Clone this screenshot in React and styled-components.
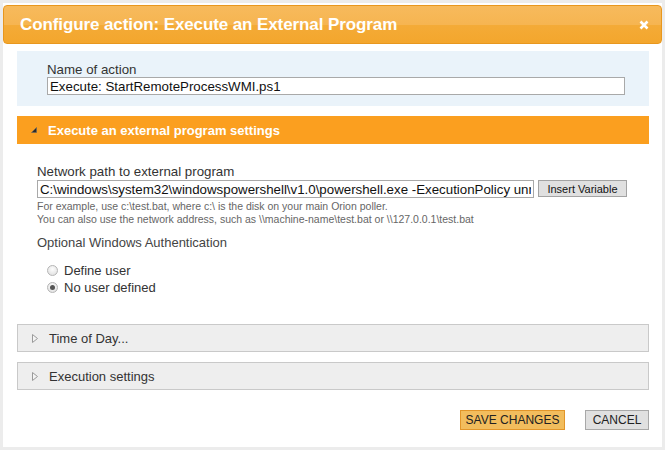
import styled, { createGlobalStyle } from "styled-components"

const Global = createGlobalStyle`
  html, body {
    margin: 0;
    padding: 0;
    background: #ececec;
    font-family: "Liberation Sans", Arial, sans-serif;
    color: #333;
  }
`

const Page = styled.div`
  padding: 3px;
`

const Dialog = styled.div`
  background: #fff;
  height: 444px;
  padding-top: 2px;
  box-sizing: border-box;
`

const Header = styled.div`
  height: 39px;
  box-sizing: border-box;
  display: flex;
  align-items: center;
  justify-content: space-between;
  padding: 0 12px 0 16px;
  border: 1px solid #e8971e;
  border-radius: 4px;
  background: linear-gradient(#f7ba5c 0%, #f6b551 50%, #f4ab37 52%, #f3a62d 100%);
`

const Title = styled.h1`
  margin: 0;
  font-size: 17px;
  font-weight: bold;
  color: #fff;
  letter-spacing: -0.1px;
`

const Close = styled.span`
  display: flex;
  width: 10px;
  height: 10px;
`

const Content = styled.div`
  padding: 7px 13px 0 14px;
`

const NameBox = styled.div`
  height: 55px;
  box-sizing: border-box;
  background: #eaf3fa;
  padding: 11px 0 0 30px;
`

const Label = styled.div`
  font-size: 13.3px;
  line-height: 15px;
  color: #333;
`

const TextInput = styled.input`
  display: block;
  box-sizing: border-box;
  width: ${p => p.$w}px;
  height: 18px;
  margin: 0;
  padding: 0 2px;
  border: 1px solid #a9a9a9;
  font-family: "Liberation Sans", Arial, sans-serif;
  font-size: 13.3px;
  color: #111;
  background: #fff;
  outline: none;
`

const Bar = styled.div`
  height: 28px;
  box-sizing: border-box;
  display: flex;
  align-items: center;
  gap: 11px;
  padding-left: 14px;
  font-size: 13px;
  background: ${p => (p.$open ? "#fb9f1f" : "#eeeeee")};
  border: ${p => (p.$open ? "none" : "1px solid #c9c9c9")};
  color: ${p => (p.$open ? "#fff" : "#333")};
  font-weight: ${p => (p.$open ? "bold" : "normal")};
  margin-top: ${p => p.$mt}px;
`

const Section = styled.div`
  padding: 20px 0 0 20px;
`

const Row = styled.div`
  display: flex;
  align-items: center;
  gap: 4px;
  margin-top: 1px;
`

const SmallButton = styled.button`
  height: 17px;
  width: 89px;
  padding: 0;
  font-family: "Liberation Sans", Arial, sans-serif;
  font-size: 11px;
  color: #111;
  background: #e0e0e0;
  border: 1px solid #a3a3a3;
  align-self: flex-start;
`

const Hints = styled.div`
  margin-top: 2px;
`

const Hint = styled.div`
  font-size: 10.5px;
  line-height: 13px;
  color: #666;
`

const SubHeading = styled.div`
  font-size: 13px;
  line-height: 16px;
  color: #444;
  margin-top: 9px;
`

const Radios = styled.div`
  margin-top: 11px;
  padding-left: 10px;
`

const RadioRow = styled.label`
  display: flex;
  align-items: center;
  gap: 6px;
  height: 17px;
  font-size: 13px;
  color: #333;
`

const Radio = styled.span`
  width: 11px;
  height: 11px;
  border-radius: 50%;
  box-sizing: border-box;
  border: 1px solid #b5b5b5;
  background: radial-gradient(circle at 50% 35%, #fdfdfd, #dcdcdc);
  display: flex;
  align-items: center;
  justify-content: center;
  &::after {
    content: "";
    width: 5px;
    height: 5px;
    border-radius: 50%;
    background: #555;
    display: ${p => (p.$checked ? "block" : "none")};
  }
`

const Footer = styled.div`
  display: flex;
  justify-content: flex-end;
  gap: 20px;
  margin-top: 20px;
`

const Action = styled.button`
  height: 20px;
  width: ${p => p.$w}px;
  padding: 0;
  font-family: "Liberation Sans", Arial, sans-serif;
  font-size: 12px;
  color: #222;
  text-transform: uppercase;
  background: ${p => (p.$primary ? "#f2bd5d" : "#e0e0e0")};
  border: 1px solid ${p => (p.$primary ? "#e2962a" : "#a8a8a8")};
`

const OpenIcon = () => (
  <svg width="6" height="6" viewBox="0 0 6 6">
    <polygon points="5.5,0.5 5.5,5.5 0.5,5.5" fill="#2b2b2b" stroke="#666" strokeWidth="0.6" />
  </svg>
)

const ClosedIcon = () => (
  <svg width="6" height="9" viewBox="0 0 6 9">
    <polygon points="0.5,0.5 5.5,4.5 0.5,8.5" fill="#f4f4f4" stroke="#9a9a9a" strokeWidth="1" />
  </svg>
)

function App() {
  return (
    <Page>
      <Global />
      <Dialog>
        <Header>
          <Title>Configure action: Execute an External Program</Title>
          <Close>
            <svg width="10" height="10" viewBox="0 0 10 10">
              <path d="M1.5 1.5 L8.5 8.5 M8.5 1.5 L1.5 8.5" stroke="#fff" strokeWidth="2.6" />
            </svg>
          </Close>
        </Header>
        <Content>
          <NameBox>
            <Label>Name of action</Label>
            <TextInput $w={578} defaultValue="Execute: StartRemoteProcessWMI.ps1" />
          </NameBox>
          <Bar $open $mt={10}>
            <OpenIcon />
            Execute an external program settings
          </Bar>
          <Section>
            <Label>Network path to external program</Label>
            <Row>
              <TextInput
                $w={497}
                defaultValue="C:\windows\system32\windowspowershell\v1.0\powershell.exe -ExecutionPolicy unrestricted -File C:\Scripts\StartRemoteProcessWMI.ps1"
              />
              <SmallButton>Insert Variable</SmallButton>
            </Row>
            <Hints>
              <Hint>For example, use c:\test.bat, where c:\ is the disk on your main Orion poller.</Hint>
              <Hint>You can also use the network address, such as \\machine-name\test.bat or \\127.0.0.1\test.bat</Hint>
            </Hints>
            <SubHeading>Optional Windows Authentication</SubHeading>
            <Radios>
              <RadioRow><Radio />Define user</RadioRow>
              <RadioRow><Radio $checked />No user defined</RadioRow>
            </Radios>
          </Section>
          <Bar $mt={28}>
            <ClosedIcon />
            Time of Day...
          </Bar>
          <Bar $mt={10}>
            <ClosedIcon />
            Execution settings
          </Bar>
          <Footer>
            <Action $primary $w={105}>Save changes</Action>
            <Action $w={64}>Cancel</Action>
          </Footer>
        </Content>
      </Dialog>
    </Page>
  )
}

export default App
